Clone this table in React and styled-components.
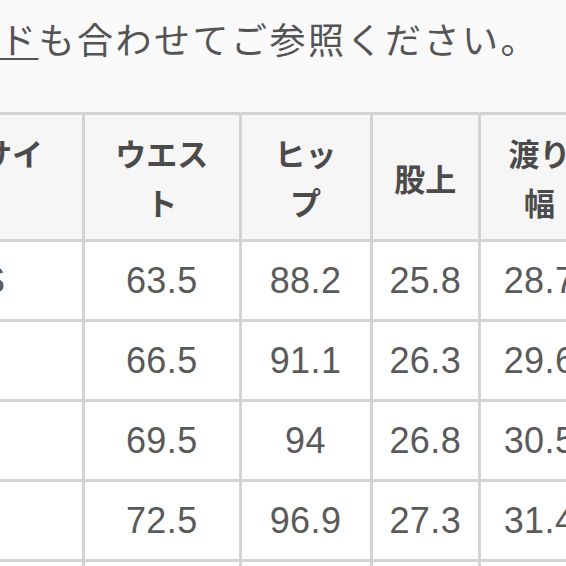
import React from "react";
import styled, { createGlobalStyle } from "styled-components";

const GlobalStyle = createGlobalStyle`
  html, body {
    margin: 0;
    padding: 0;
    background: #fafafa;
  }
  body {
    font-family: "Noto Sans CJK JP", "Noto Sans", sans-serif;
    color: #555;
  }
`;

const Page = styled.div`
  width: 566px;
  height: 566px;
  overflow: hidden;
  display: flex;
  flex-direction: column;
  background: #fafafa;
`;

const Note = styled.p`
  margin: 11px 0 0 -230px;
  white-space: nowrap;
  font-size: 36px;
  line-height: 54px;
  letter-spacing: 2.5px;
  color: #545454;
  font-weight: 400;
`;

const GuideLink = styled.a`
  color: inherit;
  text-decoration: underline;
  text-decoration-thickness: 2px;
  text-underline-offset: 4px;
`;

const SizeTable = styled.table`
  margin: 47px 0 0 -123px;
  border-collapse: collapse;
  table-layout: fixed;
  width: 843px;
  flex: none;
`;

const HeadCell = styled.th`
  border: 3px solid #d3d3d3;
  background: #f6f6f6;
  padding: 13px 20px;
  font-family: "Noto Sans CJK JP", sans-serif;
  font-weight: 700;
  font-size: 31px;
  line-height: 49px;
  color: #4b4b4b;
  text-align: center;
  vertical-align: middle;
`;

const HeadLine = styled.span`
  display: block;
  white-space: nowrap;
`;

const Cell = styled.td`
  border: 3px solid #d3d3d3;
  background: #ffffff;
  padding: 0 12px;
  height: 77px;
  font-family: "Liberation Sans", "Noto Sans CJK JP", sans-serif;
  font-size: 36px;
  line-height: 77px;
  letter-spacing: 0.4px;
  color: #5a5a5a;
  text-align: center;
  white-space: nowrap;
`;

const widths = [205, 156.5, 131, 108.5, 120, 122];

const headers = [
  ["表示サイ", "ズ"],
  ["ウエス", "ト"],
  ["ヒッ", "プ"],
  ["股上"],
  ["渡り", "幅"],
  ["裾幅"],
];

const rows = [
  ["XS", "63.5", "88.2", "25.8", "28.7", "17.5"],
  ["S", "66.5", "91.1", "26.3", "29.6", "18"],
  ["M", "69.5", "94", "26.8", "30.5", "18.5"],
  ["L", "72.5", "96.9", "27.3", "31.4", "19"],
  ["XL", "75.5", "99.8", "27.8", "32.3", "19.5"],
];

export default function App() {
  return (
    <>
      <GlobalStyle />
      <Page>
        <Note>
          ※<GuideLink href="#">サイズガイド</GuideLink>も合わせてご参照ください。
        </Note>
        <SizeTable>
          <colgroup>
            {widths.map((w, i) => (
              <col key={i} style={{ width: `${w}px` }} />
            ))}
          </colgroup>
          <thead>
            <tr>
              {headers.map((lines, i) => (
                <HeadCell key={i}>
                  {lines.map((l, j) => (
                    <HeadLine key={j}>{l}</HeadLine>
                  ))}
                </HeadCell>
              ))}
            </tr>
          </thead>
          <tbody>
            {rows.map((r, i) => (
              <tr key={i}>
                {r.map((v, j) => (
                  <Cell key={j}>{v}</Cell>
                ))}
              </tr>
            ))}
          </tbody>
        </SizeTable>
      </Page>
    </>
  );
}
